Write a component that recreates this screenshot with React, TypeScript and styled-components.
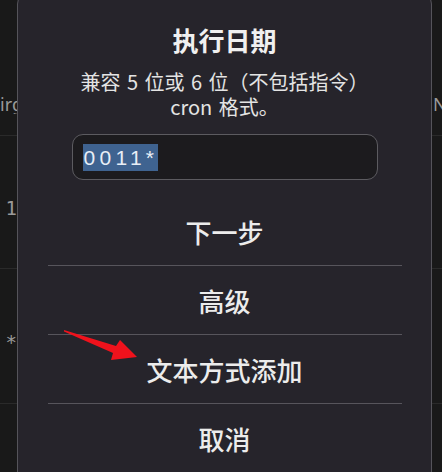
import React from "react";
import styled, { createGlobalStyle } from "styled-components";

const Global = createGlobalStyle`
  html, body { margin: 0; padding: 0; background: #191919; }
  body { width: 442px; height: 472px; overflow: hidden; font-family: "Noto Sans CJK SC", "Noto Sans", sans-serif; }
`;

const Page = styled.div`
  position: relative;
  width: 442px;
  height: 472px;
  overflow: hidden;
  background: #191919;
`;

const Row = styled.div<{ $h: number; $pad: number }>`
  display: grid;
  grid-template-columns: 17px 1fr 10px;
  height: ${(p) => p.$h}px;
  border-bottom: 1px solid #2a2a2a;
  box-sizing: border-box;
  align-items: start;
  padding-top: ${(p) => p.$pad}px;
`;

const LeftCell = styled.div<{ $mono?: boolean; $start?: boolean }>`
  display: flex;
  justify-content: ${(p) => (p.$start ? "flex-start" : "flex-end")};
  overflow: hidden;
  white-space: nowrap;
  color: #9a9a9a;
  font-size: ${(p) => (p.$mono ? "19px" : "18px")};
  line-height: 20px;
  font-family: ${(p) => (p.$mono ? '"DejaVu Sans Mono", monospace' : '"Noto Sans", sans-serif')};
`;

const RightCell = styled.div`
  grid-column: 3;
  overflow: hidden;
  white-space: nowrap;
  color: #9a9a9a;
  font-size: 18px;
  line-height: 20px;
  font-family: "Noto Sans", sans-serif;
  padding-left: 1px;
`;

const Dialog = styled.div`
  position: absolute;
  left: 17px;
  top: -8px;
  width: 415px;
  height: 500px;
  box-sizing: border-box;
  background: #26242b;
  border: 1px solid #55545a;
  border-radius: 12px;
  display: flex;
  flex-direction: column;
  align-items: center;
  padding-top: 31px;
`;

const Title = styled.div`
  color: #f0f0f0;
  font-size: 26px;
  font-weight: 700;
  line-height: 32px;
`;

const Subtitle = styled.div`
  margin-top: 13px;
  color: #e4e4e4;
  font-size: 20px;
  line-height: 25px;
  word-spacing: 2px;
  text-align: center;
`;

const InputBox = styled.div`
  margin-top: 15px;
  width: 306px;
  height: 46px;
  box-sizing: border-box;
  border: 1.5px solid #5c5b60;
  border-radius: 11px;
  background: #1c1b1e;
  display: flex;
  align-items: center;
  padding-left: 10px;
`;

const Selected = styled.span`
  background: #3f6390;
  color: #e8eef6;
  font-family: "Liberation Sans", sans-serif;
  font-size: 21px;
  line-height: 27px;
  letter-spacing: 4.3px;
  padding-left: 1px;
`;

const Actions = styled.div`
  margin-top: 17px;
  width: 354px;
  display: flex;
  flex-direction: column;
`;

const Action = styled.div<{ $last?: boolean }>`
  height: 68px;
  display: flex;
  align-items: center;
  justify-content: center;
  color: #ececec;
  font-size: 26px;
  font-weight: 500;
  border-bottom: ${(p) => (p.$last ? "none" : "1.5px solid #57555c")};
`;

const Arrow = styled.svg`
  position: absolute;
  left: 0;
  top: 0;
  width: 442px;
  height: 472px;
  pointer-events: none;
`;

export default function App() {
  return (
    <Page>
      <Global />
      <Row $h={136} $pad={94}>
        <LeftCell $start>irg</LeftCell>
        <RightCell>N</RightCell>
      </Row>
      <Row $h={133} $pad={62}>
        <LeftCell $mono>1</LeftCell>
      </Row>
      <Row $h={135} $pad={63}>
        <LeftCell $mono>*</LeftCell>
      </Row>
      <Row $h={80} $pad={0} />
      <Dialog>
        <Title>执行日期</Title>
        <Subtitle>
          兼容 5 位或 6 位（不包括指令）
          <br />
          cron 格式。
        </Subtitle>
        <InputBox>
          <Selected>0011*</Selected>
        </InputBox>
        <Actions>
          <Action>下一步</Action>
          <Action>高级</Action>
          <Action>文本方式添加</Action>
          <Action $last>取消</Action>
        </Actions>
      </Dialog>
      <Arrow viewBox="0 0 442 472">
        <polygon
          points="64,330 116,346 120,340 137,357 111,360 113,353 64,331.5"
          fill="#f0121c"
        />
      </Arrow>
    </Page>
  );
}
